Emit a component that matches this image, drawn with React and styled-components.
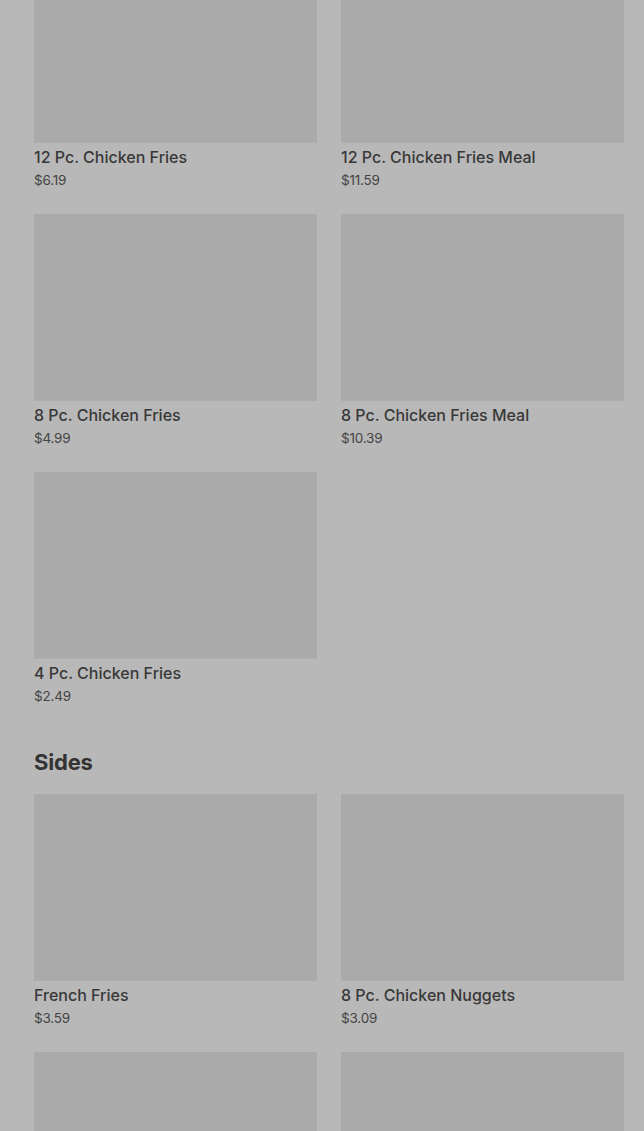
import React from "react";
import styled, { createGlobalStyle } from "styled-components";

const Global = createGlobalStyle`
  html, body { margin: 0; padding: 0; background: #b8b8b8; }
  body { font-family: Inter, "Noto Sans", sans-serif; color: #363636; overflow: hidden; }
`;

const Page = styled.div`
  margin-top: -44px;
  padding: 0 20px 0 34px;
`;

const Section = styled.section`
  display: flex;
  flex-direction: column;
`;

const Heading = styled.h2`
  margin: 43px 0 18px;
  font-size: 22px;
  line-height: 28px;
  font-weight: 700;
  letter-spacing: -0.2px;
  color: #333;
`;

const Grid = styled.div`
  display: grid;
  grid-template-columns: 1fr 1fr;
  column-gap: 24px;
  row-gap: 25px;
`;

const Card = styled.div`
  display: flex;
  flex-direction: column;
`;

const Thumb = styled.div`
  height: 187px;
  background: #aaaaaa;
  border-bottom: 2px solid #acacac;
  box-sizing: border-box;
`;

const Title = styled.div`
  margin-top: 4px;
  font-size: 16px;
  line-height: 20px;
  font-weight: 450;
  color: #383838;
`;

const Price = styled.div`
  margin-top: 4px;
  font-size: 13.5px;
  line-height: 18px;
  color: #444;
  letter-spacing: -0.2px;
`;

const main = [
  ["12 Pc. Chicken Fries", "$6.19"],
  ["12 Pc. Chicken Fries Meal", "$11.59"],
  ["8 Pc. Chicken Fries", "$4.99"],
  ["8 Pc. Chicken Fries Meal", "$10.39"],
  ["4 Pc. Chicken Fries", "$2.49"],
];

const sides = [
  ["French Fries", "$3.59"],
  ["8 Pc. Chicken Nuggets", "$3.09"],
  ["", ""],
  ["", ""],
];

const Item = ({ name, price }) => (
  <Card>
    <Thumb />
    <Title>{name}</Title>
    <Price>{price}</Price>
  </Card>
);

export default function App() {
  return (
    <>
      <Global />
      <Page>
        <Section>
          <Grid>
            {main.map(([n, p], i) => (
              <Item key={i} name={n} price={p} />
            ))}
          </Grid>
        </Section>
        <Section>
          <Heading>Sides</Heading>
          <Grid>
            {sides.map(([n, p], i) => (
              <Item key={i} name={n} price={p} />
            ))}
          </Grid>
        </Section>
      </Page>
    </>
  );
}
